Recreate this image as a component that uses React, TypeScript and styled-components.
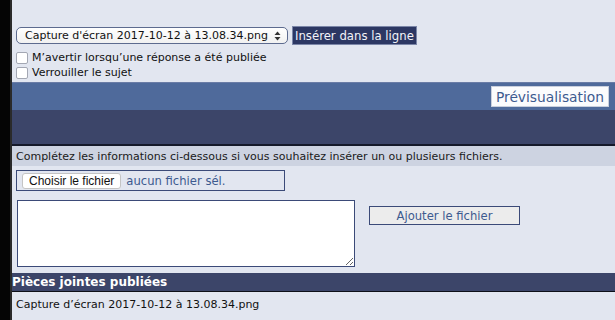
import React from "react";
import styled, { createGlobalStyle } from "styled-components";

const Global = createGlobalStyle`
  html, body { margin: 0; padding: 0; background: #000; }
  body { font-family: "DejaVu Sans", Verdana, sans-serif; font-size: 11px; }
`;

const Shell = styled.div`
  display: flex;
  width: 615px;
  height: 320px;
  overflow: hidden;
  background: #000;
`;

const Rail = styled.div`
  width: 10px;
  flex: none;
  background: #050505;
  border-right: 2px solid #2a2a2a;
`;

const Main = styled.div`
  flex: 1;
  display: flex;
  flex-direction: column;
  background: #e2e6f0;
`;

const Top = styled.div`
  height: 82px;
  box-sizing: border-box;
  padding: 26px 0 0 4px;
  display: flex;
  flex-direction: column;
`;

const SelectRow = styled.div`
  display: flex;
  align-items: center;
  gap: 4px;
  height: 19px;
`;

const FakeSelect = styled.div`
  width: 272px;
  height: 17px;
  box-sizing: border-box;
  border: 1px solid #5d6b8f;
  border-radius: 5px;
  background: linear-gradient(#ffffff, #f1f1f1);
  display: flex;
  align-items: center;
  justify-content: space-between;
  padding: 0 6px 0 8px;
  color: #111;
  font-size: 11px;
  white-space: nowrap;
`;

const NavyButton = styled.button`
  height: 19px;
  box-sizing: border-box;
  border: 1px solid #7b86a8;
  background: #2c3763;
  color: #f2f3f8;
  font-family: "DejaVu Sans", Verdana, sans-serif;
  font-size: 11.7px;
  padding: 0 2px;
  margin: 0;
`;

const CheckRow = styled.label<{ $first?: boolean }>`
  display: flex;
  align-items: center;
  gap: 4px;
  height: 15px;
  color: #111;
  font-size: 11px;
  margin-top: ${(p) => (p.$first ? "5px" : "0")};
`;

const Box = styled.span`
  width: 12px;
  height: 12px;
  box-sizing: border-box;
  border: 1px solid #a3a7b3;
  border-radius: 2px;
  background: #fff;
  display: inline-block;
`;

const BlueBar = styled.div`
  height: 28px;
  background: #4f6a9b;
  display: flex;
  align-items: center;
  justify-content: flex-end;
  padding-right: 6px;
  border-top: 1px solid #6a7ca6;
  box-sizing: border-box;
`;

const PreviewButton = styled.button`
  height: 21px;
  box-sizing: border-box;
  background: #fbfbfd;
  border: 1px solid #c9cfdd;
  color: #3d5a8f;
  font-family: "DejaVu Sans", Verdana, sans-serif;
  font-size: 13.8px;
  padding: 0 4px;
  margin: 0;
`;

const DarkBar = styled.div`
  height: 36px;
  box-sizing: border-box;
  background: #3c4569;
  border-bottom: 2px solid #15192a;
`;

const InfoRow = styled.div`
  height: 20px;
  background: #cdd3e1;
  display: flex;
  align-items: center;
  padding-left: 4px;
  color: #1a1a1a;
  font-size: 11px;
`;

const Upload = styled.div`
  padding: 4px 0 6px 4px;
  display: flex;
  flex-direction: column;
  gap: 9px;
`;

const FileBox = styled.div`
  width: 269px;
  height: 21px;
  box-sizing: border-box;
  border: 1px solid #3b4a78;
  display: flex;
  align-items: center;
  gap: 5px;
  padding-left: 5px;
`;

const ChooseButton = styled.span`
  height: 16px;
  box-sizing: border-box;
  border: 1px solid #c4c4c4;
  border-radius: 3px;
  background: #fff;
  font-family: "Liberation Sans", Arial, sans-serif;
  font-size: 12px;
  color: #111;
  display: flex;
  align-items: center;
  padding: 0 6px;
`;

const NoFile = styled.span`
  color: #3d5a8f;
  font-size: 11.6px;
`;

const UploadRow = styled.div`
  display: flex;
  align-items: flex-start;
  gap: 14px;
  padding-left: 1px;
`;

const Area = styled.textarea`
  width: 338px;
  height: 67px;
  box-sizing: border-box;
  border: 1px solid #3b4a78;
  background: #fff;
  margin: 0;
  padding: 0;
  display: block;
`;

const AddButton = styled.button`
  width: 151px;
  height: 19px;
  margin-top: 6px;
  box-sizing: border-box;
  border: 1px solid #3b4a78;
  background: #ececec;
  color: #3d5a8f;
  font-family: "DejaVu Sans", Verdana, sans-serif;
  font-size: 11.6px;
  padding: 0;
`;

const SectionHead = styled.div`
  height: 19px;
  box-sizing: border-box;
  background: #3c4569;
  border-bottom: 1px solid #0d0f18;
  color: #fff;
  font-weight: bold;
  font-size: 12px;
  display: flex;
  align-items: center;
`;

const FileLine = styled.div`
  padding: 6px 0 0 4px;
  color: #111;
  font-size: 11px;
`;

const Arrows = () => (
  <svg width="7" height="10" viewBox="0 0 7 10">
    <path d="M3.5 0.5 L6.5 4 L0.5 4 Z" fill="#333" />
    <path d="M3.5 9.5 L6.5 6 L0.5 6 Z" fill="#333" />
  </svg>
);

export default function App() {
  return (
    <Shell>
      <Global />
      <Rail />
      <Main>
        <Top>
          <SelectRow>
            <FakeSelect>
              <span>Capture d'écran 2017-10-12 à 13.08.34.png</span>
              <Arrows />
            </FakeSelect>
            <NavyButton>Insérer dans la ligne</NavyButton>
          </SelectRow>
          <CheckRow $first>
            <Box />
            M’avertir lorsqu’une réponse a été publiée
          </CheckRow>
          <CheckRow>
            <Box />
            Verrouiller le sujet
          </CheckRow>
        </Top>
        <BlueBar>
          <PreviewButton>Prévisualisation</PreviewButton>
        </BlueBar>
        <DarkBar />
        <InfoRow>
          Complétez les informations ci-dessous si vous souhaitez insérer un ou plusieurs fichiers.
        </InfoRow>
        <Upload>
          <FileBox>
            <ChooseButton>Choisir le fichier</ChooseButton>
            <NoFile>aucun fichier sél.</NoFile>
          </FileBox>
          <UploadRow>
            <Area />
            <AddButton>Ajouter le fichier</AddButton>
          </UploadRow>
        </Upload>
        <SectionHead>Pièces jointes publiées</SectionHead>
        <FileLine>Capture d’écran 2017-10-12 à 13.08.34.png</FileLine>
      </Main>
    </Shell>
  );
}
